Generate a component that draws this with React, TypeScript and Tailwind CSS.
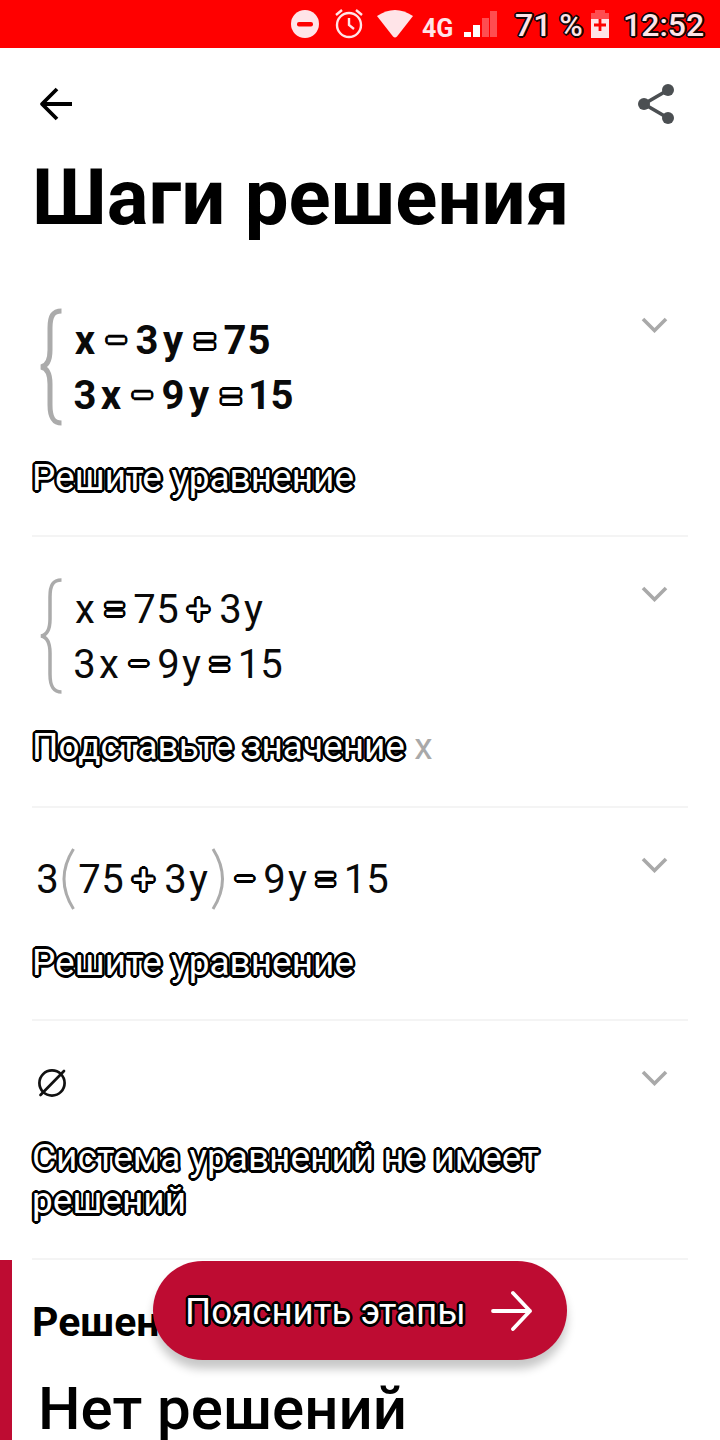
import type { ReactNode } from "react";

type Step = {
  id: string;
  height: string;
  math: ReactNode;
  caption: ReactNode;
};

// round-cornered outline around white glyphs
const outlined =
  "text-white [-webkit-text-stroke:3px_#000] [paint-order:stroke_fill] [text-shadow:2.600px_0_#000,-2.600px_0_#000,0_2.600px_#000,0_-2.600px_#000,2.200px_1.300px_#000,1.300px_2.200px_#000,-2.200px_1.300px_#000,-1.300px_2.200px_#000,2.200px_-1.300px_#000,1.300px_-2.200px_#000,-2.200px_-1.300px_#000,-1.300px_-2.200px_#000]";

const regularWidths: Record<string, string> = {
  "+": "w-[40px] pr-px",
  "−": "w-[36px]",
  "=": "w-[36px] pr-px",
  x: "w-[25px] pl-px",
  y: "w-[22px] pl-px",
  "1": "w-[22px]",
};

const boldWidths: Record<string, string> = {
  "−": "w-[36px] pr-[2px]",
  "=": "w-[36px]",
  x: "w-[28px]",
  y: "w-[28px]",
  "1": "w-[21px]",
};

const steps: Step[] = [
  {
    id: "system",
    height: "h-[269px] pb-[36px]",
    math: <System bold rows={["x−3y=75", "3x−9y=15"]} />,
    caption: "Решите уравнение",
  },
  {
    id: "substitute",
    height: "h-[271px] pb-[38px]",
    math: <System rows={["x=75+3y", "3x−9y=15"]} />,
    caption: (
      <>
        Подставьте значение{" "}
        <span className="text-[#a9a9a9] [-webkit-text-stroke:0] [text-shadow:none]">x</span>
      </>
    ),
  },
  {
    id: "solve",
    height: "h-[213px] pb-[35px]",
    math: (
      <div className="flex h-[62px] items-center pl-1">
        <Expression text="3" />
        <Paren />
        <Expression text="75+3y" />
        <Paren close />
        <Expression text="−9y=15" />
      </div>
    ),
    caption: "Решите уравнение",
  },
  {
    id: "empty",
    height: "h-[239px] pb-[36px]",
    math: (
      <svg className="ml-[5px] mt-[7px] size-[30px]" viewBox="0 0 30 30" fill="none" stroke="#111" strokeWidth="2.7" strokeLinecap="round">
        <circle cx="15" cy="15" r="12.6" />
        <path d="M3.500 27 27 3" />
      </svg>
    ),
    caption: "Система уравнений не имеет решений",
  },
];

export default function App() {
  return (
    <div className="relative flex h-[1440px] w-[720px] flex-col overflow-hidden bg-white font-['Roboto',sans-serif] text-black">
      <StatusBar />
      <header className="flex h-[220px] shrink-0 flex-col px-8">
        <div className="flex h-28 items-center justify-between pr-[13px] pl-[7px]">
          <svg className="size-[34px]" viewBox="0 0 34 34" fill="none" stroke="#000" strokeWidth="3.8">
            <path d="M33 17H3M18 2 3 17l15 15" strokeLinejoin="round" />
          </svg>
          <svg className="h-[42px] w-[38px]" viewBox="0 0 38 42" fill="#4b4f52">
            <path d="M31 7 7 21l24 14" fill="none" stroke="#4b4f52" strokeWidth="3.6" />
            <circle cx="31" cy="7" r="6" />
            <circle cx="7" cy="21" r="6" />
            <circle cx="31" cy="35" r="6" />
          </svg>
        </div>
        <h1 className="-mt-2 text-[78px] leading-[92px] font-bold whitespace-nowrap">Шаги решения</h1>
      </header>
      <main className="flex shrink-0 flex-col px-8">
        {steps.map((step) => (
          <section key={step.id} className={`relative flex flex-col justify-between border-b-2 border-[#f4f4f4] pt-10 ${step.height}`}>
            {step.math}
            <p className={`text-[37px] leading-[43px] ${outlined}`}>{step.caption}</p>
            <svg className="absolute top-[49px] right-5 h-4 w-[27px]" viewBox="0 0 27 16" fill="none" stroke="#a9a9a9" strokeWidth="3.6">
              <path d="m2 2 11.500 11.500L25 2" />
            </svg>
          </section>
        ))}
      </main>
      <section className="h-[180px] shrink-0 border-l-12 border-[#be0c32] pl-5">
        <h2 className="pt-[38px] text-[41px] leading-[48px] font-bold">Решение</h2>
        <p className="mt-[27px] pl-1.5 text-[60px] leading-[71px] font-medium whitespace-nowrap">Нет решений</p>
      </section>
      <button className="absolute top-[1261px] left-[153px] flex h-[99px] w-[414px] items-center justify-between rounded-full bg-[#be0c32] pr-[34px] pl-[32px] shadow-[0_9px_10px_rgba(0,0,0,0.22)]">
        <span className={`pt-[3px] text-[36.7px] leading-[44px] whitespace-nowrap ${outlined}`}>Пояснить этапы</span>
        <svg className="h-[42px] w-[42px]" viewBox="0 0 42 42" fill="none" stroke="#fff" strokeWidth="3.8" strokeLinecap="round" strokeLinejoin="round">
          <path d="M2 21h37M22 3l17 18-17 18" />
        </svg>
      </button>
    </div>
  );
}

function StatusBar() {
  return (
    <div className="flex h-12 shrink-0 items-center bg-[#ff0000] pl-[290px] text-[#ffe4e8]">
      <svg className="size-[30px]" viewBox="0 0 30 30">
        <circle cx="15" cy="15" r="14" fill="currentColor" />
        <rect x="7" y="13" width="16" height="4.500" rx="2" fill="#f00" />
      </svg>
      <svg className="ml-[14px] size-[30px]" viewBox="0 0 30 30" fill="none" stroke="currentColor" strokeWidth="2.400">
        <circle cx="15" cy="16" r="12" />
        <path d="M15 9v7l5 4M2 6l6-5M22 1l6 5" />
      </svg>
      <svg className="ml-[13px] h-[28px] w-[36px]" viewBox="0 0 36 28" fill="currentColor">
        <path d="M0 6Q18-6 36 6L20 26.500q-2 2-4 0Z" />
      </svg>
      <span className="mt-[9px] ml-[9px] w-[31px] text-[25px] leading-8 font-bold">4G</span>
      <svg className="ml-[11px] h-[28px] w-[34px]" viewBox="0 0 34 28">
        <path d="M0 22h7v5H0Z" fill="#fff" />
        <path d="M9 15h7v12H9Z" fill="#fff" />
        <path d="M18 8h7v19h-7ZM26 1h7v26h-7Z" fill="#ff4d50" />
      </svg>
      <span className="mt-[2px] ml-[17px] w-[68px] text-[32px] font-medium whitespace-nowrap [text-shadow:2px_0_#190505,-2px_0_#190505,0_2px_#190505,0_-2px_#190505,1.4px_1.4px_#190505,-1.4px_1.4px_#190505,1.4px_-1.4px_#190505,-1.4px_-1.4px_#190505]">71 %</span>
      <svg className="ml-[7px] h-[30px] w-5" viewBox="0 0 20 30">
        <path d="M5 1h10v3h4v8H1V4h4Z" fill="#ff4d50" />
        <path d="M1 10h18v19H1Z" fill="currentColor" />
        <path d="M10 10v12M4 16h12" stroke="#f00" strokeWidth="2.800" />
      </svg>
      <span className="mt-[2px] ml-[13px] text-[32px] font-medium [text-shadow:2px_0_#190505,-2px_0_#190505,0_2px_#190505,0_-2px_#190505,1.4px_1.4px_#190505,-1.4px_1.4px_#190505,1.4px_-1.4px_#190505,-1.4px_-1.4px_#190505]">12:52</span>
    </div>
  );
}

function Expression({ text, bold = false }: { text: string; bold?: boolean }) {
  const widths = bold ? boldWidths : regularWidths;
  return (
    <div className={`flex text-[40px] leading-[55px] ${bold ? "font-bold" : ""}`}>
      {text.split("").map((char, index) => {
        const operator = "+−=".includes(char);
        return (
          <span
            key={index}
            className={`flex shrink-0 justify-center ${widths[char] ?? (bold ? "w-6" : "w-[23px]")} ${operator ? outlined : "text-[#0a0a0a]"}`}
          >
            {char}
          </span>
        );
      })}
    </div>
  );
}

function System({ rows, bold = false }: { rows: string[]; bold?: boolean }) {
  return (
    <div className="flex pl-2">
      <svg className="h-[118px] w-[22px]" viewBox="0 0 22 118" fill="none" stroke="#ababab" strokeWidth={bold ? 5 : 3.5}>
        <path d="M21.500 3C13 3 10 8 10 20v22c0 10-3 16-9 17 6 1 9 7 9 17v21c0 12 3 18 11.500 18" />
      </svg>
      <div className="flex flex-col pt-[5px] pl-[11px]">
        {rows.map((row) => (
          <div key={row} className={row.startsWith("x") ? (bold ? "-ml-0.5" : "-ml-px") : ""}>
            <Expression text={row} bold={bold} />
          </div>
        ))}
      </div>
    </div>
  );
}

function Paren({ close = false }: { close?: boolean }) {
  return (
    <svg className={`h-[62px] shrink-0 ${close ? "w-[18px]" : "w-[19px]"}`} viewBox="0 0 18 62" fill="none" stroke="#ababab" strokeWidth="3">
      <path d={close ? "M4 1q19 30 0 60" : "M14 1q-19 30 0 60"} />
    </svg>
  );
}
